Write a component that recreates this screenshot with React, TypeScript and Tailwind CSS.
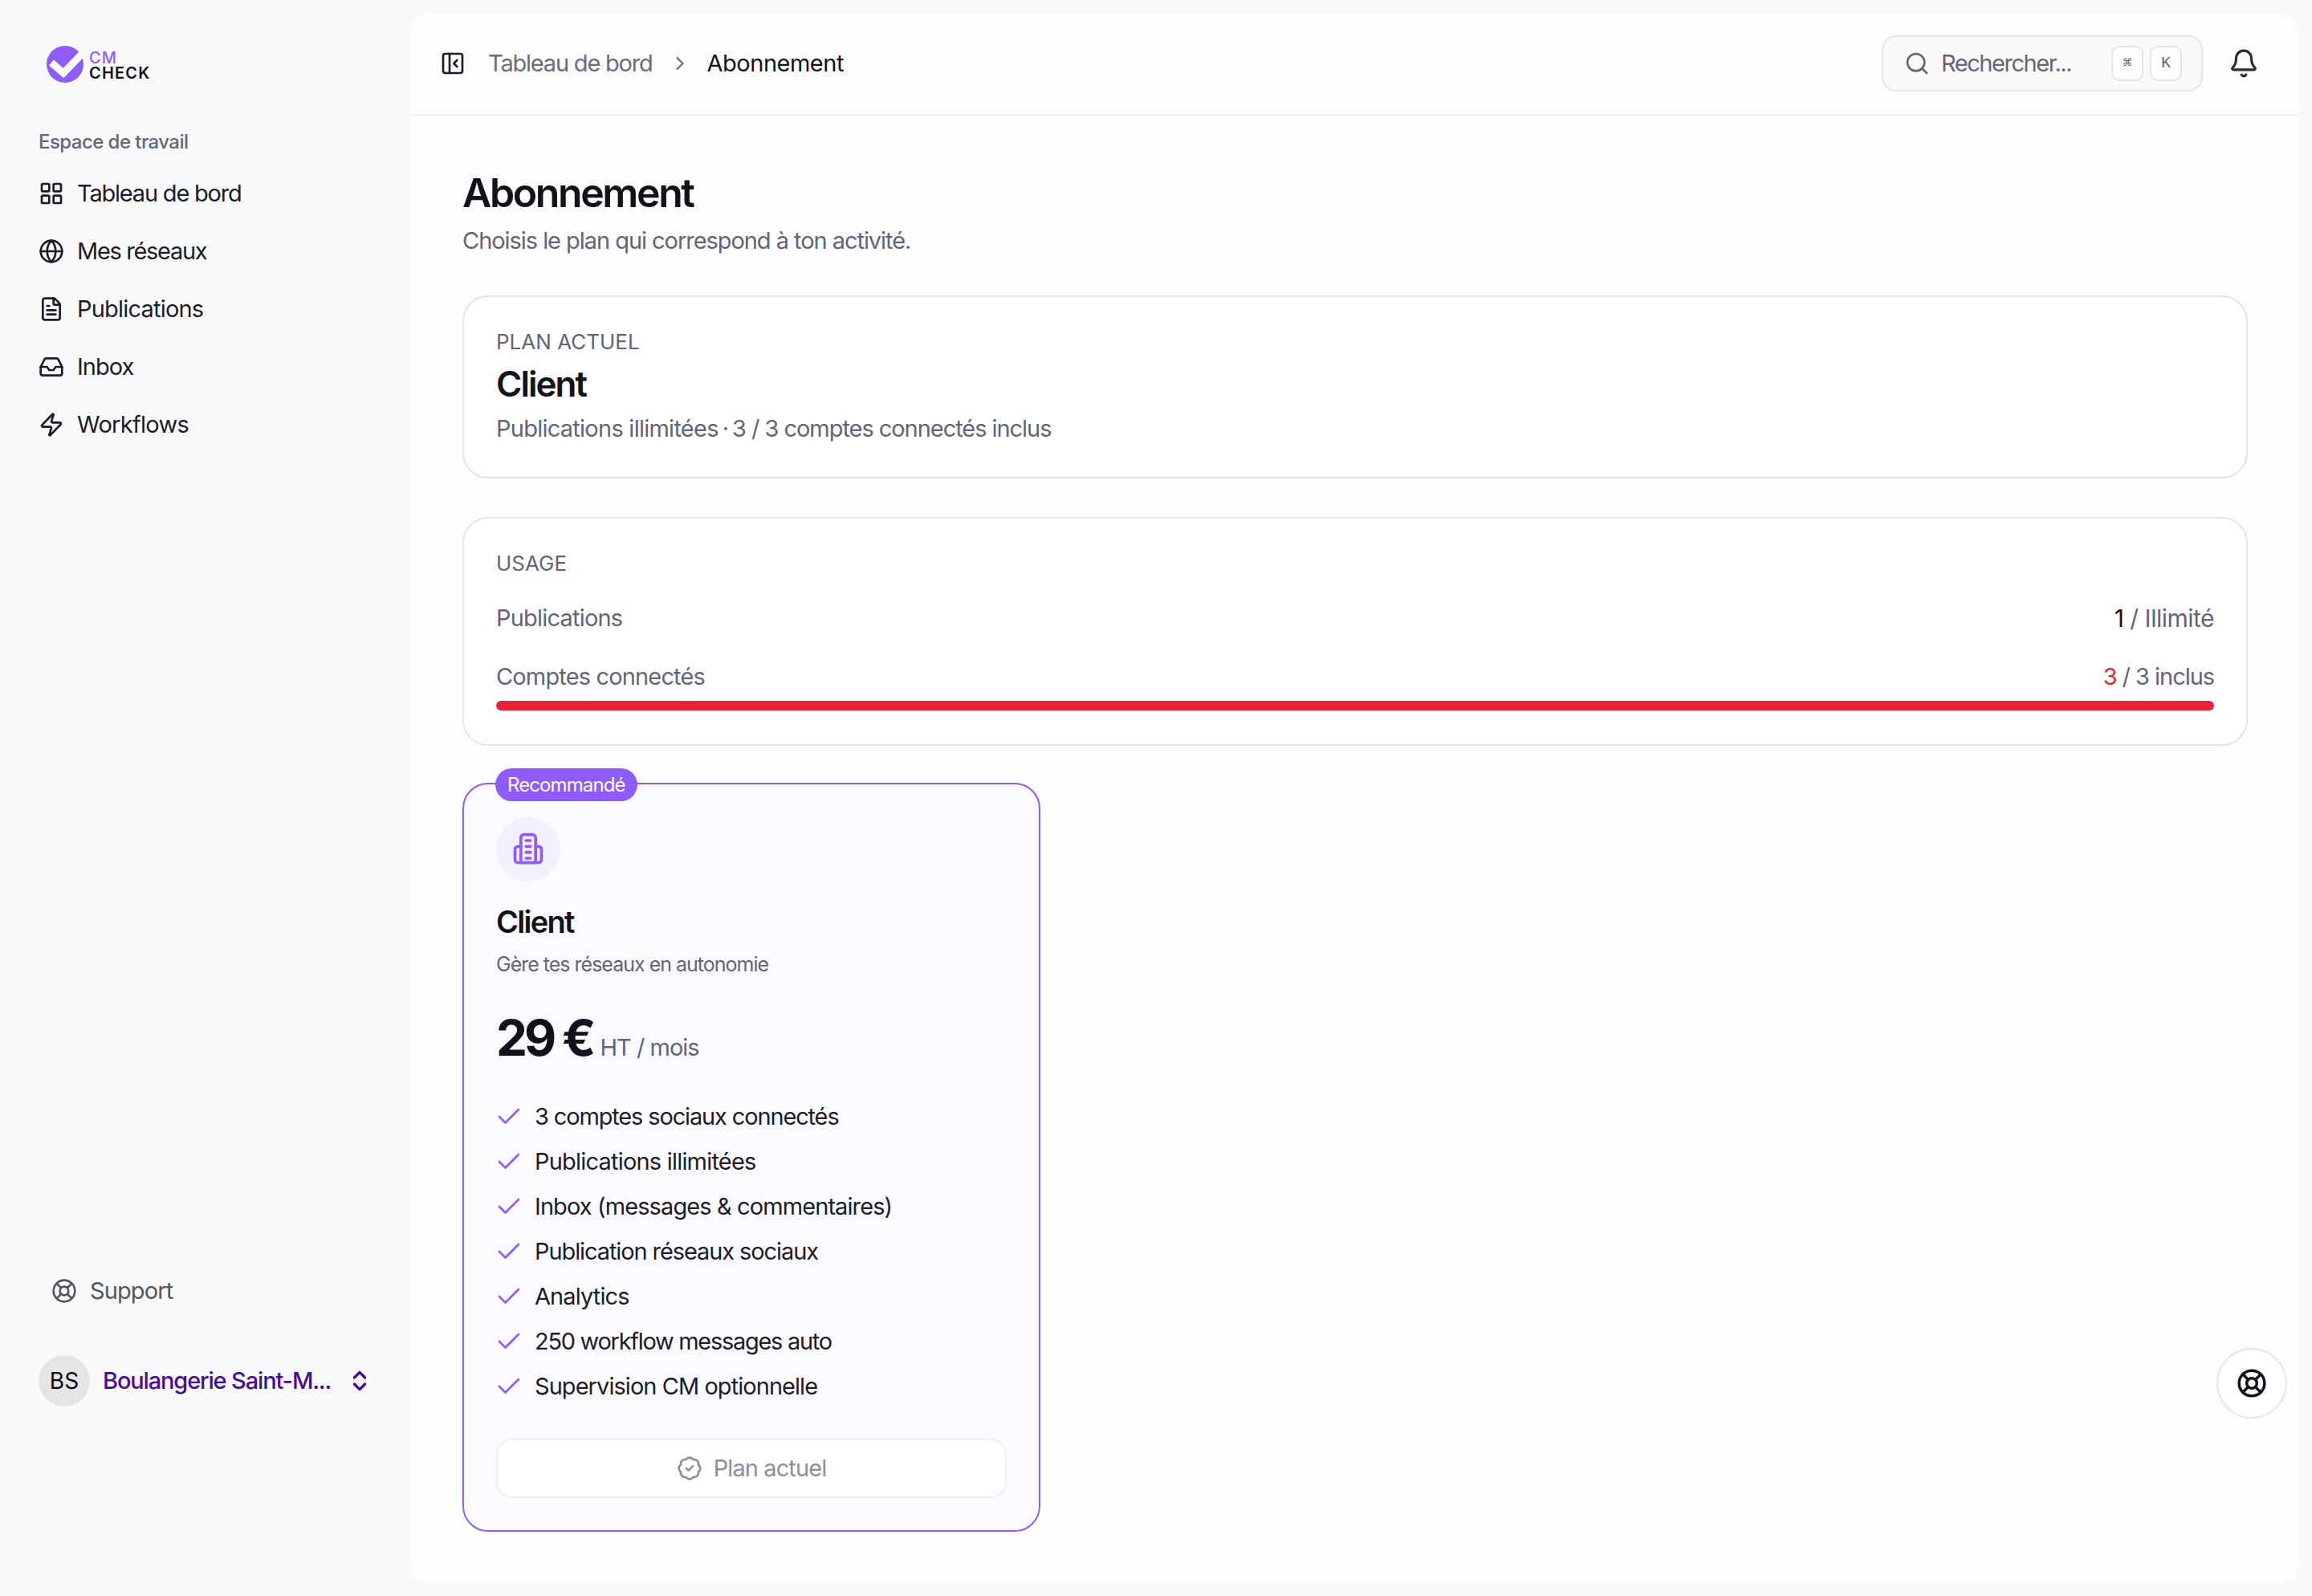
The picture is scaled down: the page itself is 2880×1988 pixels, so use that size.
import {
  BadgeCheck,
  Bell,
  Check,
  ChevronRight,
  ChevronsUpDown,
  FileText,
  Globe,
  Inbox,
  LayoutGrid,
  LifeBuoy,
  PanelLeftClose,
  Search,
  Zap,
} from "lucide-react";

const navItems = [
  { label: "Tableau de bord", icon: LayoutGrid, tracking: "tracking-[-1.2px]" },
  { label: "Mes réseaux", icon: Globe, tracking: "tracking-[-1.3px]" },
  { label: "Publications", icon: FileText, tracking: "tracking-[-0.8px]" },
  { label: "Inbox", icon: Inbox, tracking: "tracking-[-1px]" },
  { label: "Workflows", icon: Zap, tracking: "tracking-[-0.7px]" },
];

const features = [
  { label: "3 comptes sociaux connectés", tracking: "tracking-[-1.15px]" },
  { label: "Publications illimitées", tracking: "tracking-[-0.8px]" },
  { label: "Inbox (messages & commentaires)", tracking: "tracking-[-0.9px]" },
  { label: "Publication réseaux sociaux", tracking: "tracking-[-1.1px]" },
  { label: "Analytics", tracking: "tracking-[-0.9px]" },
  { label: "250 workflow messages auto", tracking: "tracking-[-1.3px]" },
  { label: "Supervision CM optionnelle", tracking: "tracking-[-0.95px]" },
];

function Logo() {
  return (
    <div className="flex items-center gap-[7px]">
      <svg width="46" height="46" viewBox="0 0 46 46" className="shrink-0">
        <circle cx="23" cy="23" r="23" fill="#8f5bff" />
        <path d="M6 21 L21 34 L44 10" fill="none" stroke="#fbfcfe" strokeWidth="9" />
      </svg>
      <div className="mt-[4px] flex flex-col text-[20px] leading-[19px] font-semibold tracking-[1.2px]">
        <span className="font-medium text-[#8f5bff]">CM</span>
        <span className="text-[#111118]">CHECK</span>
      </div>
    </div>
  );
}

function Sidebar() {
  return (
    <aside className="flex w-[512px] shrink-0 flex-col pl-[48px]">
      <div className="pt-[57px] pl-[10px]">
        <Logo />
      </div>
      <p className="mt-[58px] text-[24px] leading-[32px] font-medium tracking-[-0.55px] text-[#62647a]">
        Espace de travail
      </p>
      <nav className="mt-[12px] flex flex-col">
        {navItems.map((item) => (
          <div key={item.label} className="flex h-[72px] items-center gap-[16px] text-[#1c1c2b]">
            <item.icon size={32} strokeWidth={2} />
            <span className={`text-[29px] leading-[36px] ${item.tracking}`}>{item.label}</span>
          </div>
        ))}
      </nav>
      <div className="mt-auto flex h-[72px] items-center gap-[16px] pl-[16px] text-[#55555f]">
        <LifeBuoy size={32} strokeWidth={2} />
        <span className="text-[29px] leading-[36px] tracking-[-0.9px]">Support</span>
      </div>
      <div className="mt-[44px] mb-[236px] flex items-center">
        <div className="flex size-[64px] items-center justify-center rounded-full bg-[#e5e5e6] text-[28px] text-[#0a0a0a]">
          BS
        </div>
        <span className="ml-[16px] w-[286px] text-[29px] leading-[36px] font-medium tracking-[-1.15px] whitespace-nowrap text-[#4b0a9a]">
          Boulangerie Saint-M...
        </span>
        <ChevronsUpDown size={32} strokeWidth={2.5} className="ml-[18px] text-[#4b0a9a]" />
      </div>
    </aside>
  );
}

function Header() {
  return (
    <header className="flex h-[128px] shrink-0 items-center border-b-2 border-[#f1f1f4] pr-[50px] pl-[36px]">
      <PanelLeftClose size={32} strokeWidth={2} className="text-[#1c1c2b]" />
      <span className="ml-[28px] text-[29px] leading-[36px] tracking-[-1.2px] text-[#6a6c80]">Tableau de bord</span>
      <ChevronRight size={28} strokeWidth={2} className="mx-[20px] text-[#6a6c80]" />
      <span className="text-[29px] leading-[36px] tracking-[-0.5px] text-[#12121c]">Abonnement</span>
      <div className="ml-auto flex h-[70px] w-[400px] items-center rounded-[18px] border-2 border-[#e4e4ec] bg-[#fafafb] pr-[24px] pl-[26px]">
        <Search size={32} strokeWidth={2} className="text-[#62647a]" />
        <span className="ml-[14px] text-[29px] leading-[36px] tracking-[-1.45px] text-[#62647a]">Rechercher...</span>
        <div className="ml-auto flex gap-[8px]">
          <kbd className="flex h-[44px] w-[40px] items-center justify-center rounded-[10px] border-2 border-[#e4e4ec] bg-white text-[18px] text-[#62647a]">
            ⌘
          </kbd>
          <kbd className="flex h-[44px] w-[40px] items-center justify-center rounded-[10px] border-2 border-[#e4e4ec] bg-white text-[20px] text-[#62647a]">
            K
          </kbd>
        </div>
      </div>
      <Bell size={38} strokeWidth={2} className="ml-[32px] text-[#2c2c36]" />
    </header>
  );
}

function PlanCard() {
  return (
    <div className="relative mt-[46px] w-[720px] rounded-[32px] border-2 border-[#8f5bff] bg-[#fbfaff] px-[40px] pt-[41px] pb-[40px]">
      <span className="absolute -top-[20px] left-[39px] flex h-[41px] items-center rounded-full bg-[#8f5bff] px-[15px] text-[24px] tracking-[-0.9px] text-white">
        Recommandé
      </span>
      <div className="flex size-[80px] items-center justify-center rounded-full bg-[#f3f0ff]">
        <svg
          width="44"
          height="44"
          viewBox="0 0 24 24"
          fill="none"
          stroke="#8f5bff"
          strokeWidth="2"
          strokeLinecap="round"
          strokeLinejoin="round"
        >
          <path d="M7 21V4a2 2 0 0 1 2-2h6a2 2 0 0 1 2 2v17Z" />
          <path d="M7 10H5a2 2 0 0 0-2 2v7a2 2 0 0 0 2 2h14a2 2 0 0 0 2-2v-7a2 2 0 0 0-2-2h-2" />
          <path d="M10.5 6h3" />
          <path d="M10.5 10h3" />
          <path d="M10.5 14h3" />
          <path d="M10.5 18h3" />
        </svg>
      </div>
      <h2 className="mt-[25px] text-[38px] leading-[50px] font-semibold tracking-[-1.7px] text-[#12121c]">Client</h2>
      <p className="mt-[10px] text-[25px] leading-[36px] tracking-[-1px] text-[#62647a]">
        Gère tes réseaux en autonomie
      </p>
      <div className="mt-[38px] flex items-baseline">
        <span className="text-[62px] leading-[72px] font-bold tracking-[-4px] text-[#12121c]">29 €</span>
        <span className="ml-[9px] text-[29px] leading-[36px] tracking-[-1px] text-[#62647a]">HT / mois</span>
      </div>
      <ul className="mt-[34px] flex flex-col">
        {features.map((feature) => (
          <li key={feature.label} className="flex h-[56px] items-center gap-[14px] text-[#1c1c2b]">
            <Check size={36} strokeWidth={1.8} className="-ml-[2px] shrink-0 text-[#8f5bff]" />
            <span className={`text-[29px] leading-[36px] ${feature.tracking}`}>{feature.label}</span>
          </li>
        ))}
      </ul>
      <button
        type="button"
        className="mt-[37px] flex h-[74px] w-full items-center justify-center gap-[14px] rounded-[20px] border-2 border-[#f0f0f4] bg-white text-[#8d8e9a]"
      >
        <BadgeCheck size={32} strokeWidth={2} />
        <span className="text-[29px] leading-[36px] tracking-[-0.9px]">Plan actuel</span>
      </button>
    </div>
  );
}

function Content() {
  return (
    <main className="flex flex-1 flex-col px-[64px] pt-[68px]">
      <h1 className="text-[50px] leading-[56px] font-semibold tracking-[-2.4px] text-[#12121c]">Abonnement</h1>
      <p className="mt-[14px] text-[29px] leading-[36px] tracking-[-1.05px] text-[#62647a]">
        Choisis le plan qui correspond à ton activité.
      </p>

      <section className="mt-[50px] h-[228px] rounded-[32px] border-2 border-[#e4e4ec] bg-white px-[40px] pt-[38px]">
        <p className="text-[26px] leading-[36px] text-[#62647a]">PLAN ACTUEL</p>
        <p className="mt-[8px] text-[44px] leading-[52px] font-semibold tracking-[-2px] text-[#12121c]">Client</p>
        <p className="mt-[12px] flex text-[29px] leading-[36px] tracking-[-1.05px] text-[#62647a]">
          <span className="tracking-[-0.75px]">Publications illimitées</span>
          <span className="mx-[5px]">·</span>
          <span>3 / 3 comptes connectés inclus</span>
        </p>
      </section>

      <section className="mt-[48px] h-[285px] rounded-[32px] border-2 border-[#e4e4ec] bg-white px-[40px] pt-[38px]">
        <p className="text-[26px] leading-[36px] text-[#62647a]">USAGE</p>
        <div className="mt-[32px] flex items-center justify-between text-[29px] leading-[36px] tracking-[-0.8px] text-[#62647a]">
          <span>Publications</span>
          <span className="text-3xl tracking-[-0.5px]">
            <span className="text-[#12121c]">1</span> / Illimité
          </span>
        </div>
        <div className="mt-[37px] flex items-center justify-between text-[29px] leading-[36px] tracking-[-0.85px] text-[#62647a]">
          <span>Comptes connectés</span>
          <span className="tracking-[-1.05px]">
            <span className="text-[#ed2233]">3</span> / 3 inclus
          </span>
        </div>
        <div className="mt-[12px] h-[12px] rounded-full bg-[#ed2233]" />
      </section>

      <PlanCard />
    </main>
  );
}

export default function App() {
  return (
    <div className="relative flex h-[1988px] w-[2880px] overflow-hidden bg-[#f9fafc] font-['Inter',sans-serif]">
      <Sidebar />
      <div className="my-[16px] mr-[16px] flex flex-1 flex-col rounded-[28px] bg-[#fdfdfe]">
        <Header />
        <Content />
      </div>
      <button
        type="button"
        className="absolute top-[1679px] left-[2761px] flex size-[88px] items-center justify-center rounded-full border-2 border-[#e4e4ec] bg-white text-[#12121c]"
      >
        <LifeBuoy size={38} strokeWidth={2.2} />
      </button>
    </div>
  );
}
